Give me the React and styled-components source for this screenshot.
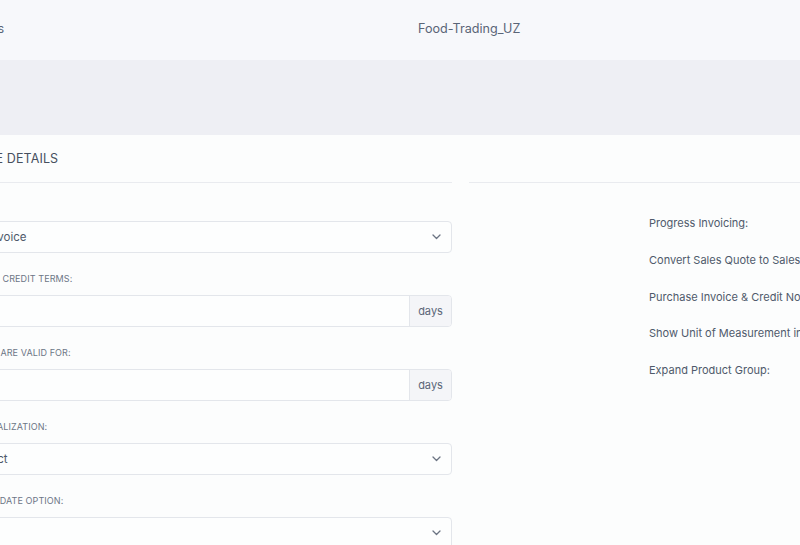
import React from "react";
import styled, { createGlobalStyle } from "styled-components";

const Global = createGlobalStyle`
  html, body { margin: 0; padding: 0; }
  body {
    background: #fcfdfd;
    font-family: "Inter", "Open Sans", sans-serif;
    color: #4f5a6b;
    overflow: hidden;
  }
  * { box-sizing: border-box; }
`;

const Viewport = styled.div`
  width: 800px;
  height: 545px;
  overflow: hidden;
`;

const Page = styled.div`
  width: 1100px;
  margin-left: -48px;
`;

const Header = styled.header`
  height: 60px;
  background: #f7f8fb;
  display: flex;
  align-items: center;
  padding-bottom: 4px;
  font-size: 12.6px;
  color: #5a6577;
`;

const Crumb = styled.div`
  flex: 0 0 466px;
  padding-left: 4px;
`;

const Company = styled.div``;

const Banner = styled.div`
  height: 75px;
  background: #eeeff4;
`;

const Content = styled.div`
  display: flex;
  gap: 17px;
  background: #fcfdfd;
`;

const LeftCol = styled.section`
  flex: 0 0 500px;
`;

const RightCol = styled.section`
  flex: 0 0 500px;
`;

const SectionHead = styled.div`
  height: 48px;
  border-bottom: 1px solid #e9ebef;
  padding-top: 16px;
  font-size: 12.5px;
  letter-spacing: 0.1px;
  color: #46505f;
  text-transform: uppercase;
`;

const Fields = styled.div`
  padding-top: 16px;
`;

const Field = styled.div`
  margin-bottom: 20px;
`;

const Label = styled.div`
  font-size: 9px;
  line-height: 12px;
  height: 12px;
  margin-bottom: 10px;
  padding-left: 8px;
  letter-spacing: 0.1px;
  text-transform: uppercase;
  color: #6c7686;
  white-space: nowrap;
`;

const Control = styled.div`
  height: 32px;
  border: 1px solid #e3e6eb;
  border-radius: 4px;
  background: #fdfefe;
  display: flex;
  align-items: stretch;
  font-size: 11.5px;
  color: #4f5a6b;
  overflow: hidden;
`;

const Value = styled.div`
  flex: 1;
  display: flex;
  align-items: center;
  padding-left: 12px;
`;

const Chevron = styled.div`
  width: 30px;
  display: flex;
  align-items: center;
  justify-content: center;
  color: #6b7483;
`;

const Addon = styled.div`
  width: 42px;
  display: flex;
  align-items: center;
  justify-content: center;
  background: #f4f5f8;
  border-left: 1px solid #e3e6eb;
  color: #5a6577;
  font-size: 11px;
`;

const Options = styled.div`
  padding-top: 22px;
  padding-left: 180px;
`;

const OptionRow = styled.div`
  height: 36.7px;
  display: flex;
  align-items: center;
  font-size: 11px;
  color: #4f5a6b;
  white-space: nowrap;
`;

const ChevronIcon = () => (
  <svg width="9" height="6" viewBox="0 0 9 6" fill="none">
    <path d="M1 1l3.5 3.5L8 1" stroke="currentColor" strokeWidth="1.3" strokeLinecap="round" strokeLinejoin="round" />
  </svg>
);

const SelectField = ({ label, value }) => (
  <Field>
    <Label>{label}</Label>
    <Control>
      <Value>{value}</Value>
      <Chevron><ChevronIcon /></Chevron>
    </Control>
  </Field>
);

const DaysField = ({ label, value }) => (
  <Field>
    <Label>{label}</Label>
    <Control>
      <Value>{value}</Value>
      <Addon>days</Addon>
    </Control>
  </Field>
);

const options = [
  "Progress Invoicing:",
  "Convert Sales Quote to Sales Invoice:",
  "Purchase Invoice & Credit Note:",
  "Show Unit of Measurement in Invoice:",
  "Expand Product Group:",
];

export default function App() {
  return (
    <>
      <Global />
      <Viewport>
        <Page>
          <Header>
            <Crumb>Settings</Crumb>
            <Company>Food-Trading_UZ</Company>
          </Header>
          <Banner />
          <Content>
            <LeftCol>
              <SectionHead>Invoice Details</SectionHead>
              <Fields>
                <SelectField label="Type:" value="Tax Invoice" />
                <DaysField label="Default Credit Terms:" value="" />
                <DaysField label="Quotes Are Valid For:" value="" />
                <SelectField label="Personalization:" value="Product" />
                <SelectField label="Invoice Date Option:" value="" />
              </Fields>
            </LeftCol>
            <RightCol>
              <SectionHead />
              <Options>
                {options.map((o) => (
                  <OptionRow key={o}>{o}</OptionRow>
                ))}
              </Options>
            </RightCol>
          </Content>
        </Page>
      </Viewport>
    </>
  );
}
